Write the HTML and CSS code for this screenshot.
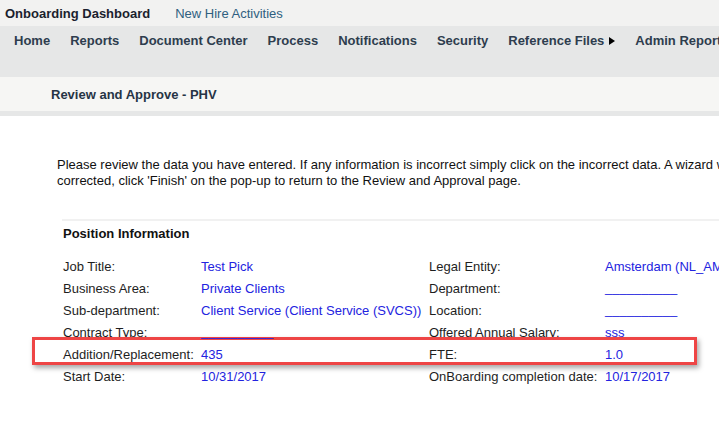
FILE: index.html
```html
<!DOCTYPE html>
<html>
<head>
<meta charset="utf-8">
<link rel="stylesheet" href="styles.css">
</head>
<body>
<div class="topbar">
  <span class="brand">Onboarding Dashboard</span>
  <span class="toplink">New Hire Activities</span>
</div>
<nav class="nav">
  <span class="nav-item">Home</span>
  <span class="nav-item">Reports</span>
  <span class="nav-item">Document Center</span>
  <span class="nav-item">Process</span>
  <span class="nav-item">Notifications</span>
  <span class="nav-item">Security</span>
  <span class="nav-item">Reference Files<i class="arrow"></i></span>
  <span class="nav-item">Admin Reports</span>
</nav>
<div class="subheader">Review and Approve - PHV</div>
<div class="strip"></div>
<main class="content">
  <p class="intro">Please review the data you have entered. If any information is incorrect simply click on the incorrect data. A wizard will open to guide you through the correction process. Once the data has been<br>corrected, click 'Finish' on the pop-up to return to the Review and Approval page.</p>
  <section class="section">
    <h2 class="section-title">Position Information</h2>
    <div class="rows">
      <div class="row">
        <span class="label">Job Title:</span><span class="value">Test Pick</span>
        <span class="label">Legal Entity:</span><span class="value">Amsterdam (NL_AMS)</span>
      </div>
      <div class="row">
        <span class="label">Business Area:</span><span class="value">Private Clients</span>
        <span class="label">Department:</span><span class="value blank">__________</span>
      </div>
      <div class="row">
        <span class="label">Sub-department:</span><span class="value">Client Service (Client Service (SVCS))</span>
        <span class="label">Location:</span><span class="value blank">__________</span>
      </div>
      <div class="row">
        <span class="label">Contract Type:</span><span class="value blank">__________</span>
        <span class="label">Offered Annual Salary:</span><span class="value">sss</span>
      </div>
      <div class="row row-highlight">
        <span class="label">Addition/Replacement:</span><span class="value">435</span>
        <span class="label">FTE:</span><span class="value">1.0</span>
      </div>
      <div class="row">
        <span class="label">Start Date:</span><span class="value">10/31/2017</span>
        <span class="label">OnBoarding completion date:</span><span class="value">10/17/2017</span>
      </div>
    </div>
  </section>
</main>
</body>
</html>
```

FILE: styles.css
```css
html {
  overflow: hidden;
}
body {
  margin: 0;
  font-family: "Liberation Sans", Arial, sans-serif;
  font-size: 13px;
  color: #1a1a1a;
  background: #ffffff;
  white-space: nowrap;
}
.topbar {
  height: 26px;
  background: #f2f2f1;
  display: flex;
  align-items: center;
  padding-left: 5px;
}
.brand {
  font-weight: bold;
  color: #1b1f2e;
}
.toplink {
  margin-left: 25px;
  color: #2f5f80;
}
.nav {
  height: 51px;
  box-sizing: border-box;
  background: #e6e7e7;
  padding: 7px 0 0 4px;
  display: flex;
  align-items: flex-start;
}
.nav-item {
  padding: 0 10px;
  line-height: 16px;
  font-weight: bold;
  color: #2e3d4e;
  display: flex;
  align-items: center;
}
.arrow {
  display: inline-block;
  width: 0;
  height: 0;
  margin-left: 5px;
  border-top: 4.5px solid transparent;
  border-bottom: 4.5px solid transparent;
  border-left: 6px solid #000;
}
.subheader {
  height: 34px;
  background: #f6f6f4;
  display: flex;
  align-items: center;
  padding-left: 51px;
  font-weight: bold;
  color: #263445;
}
.strip {
  height: 5px;
  background: #e6e7e7;
}
.content {
  padding: 41px 0 0 57px;
}
.intro {
  margin: 0;
  line-height: 16px;
  color: #111;
}
.section {
  margin: 30px 0 0 5px;
  border-top: 2px solid #f1f1f1;
  padding: 5px 0 0 1px;
}
.section-title {
  margin: 0;
  font-size: 13px;
  line-height: 16px;
  font-weight: bold;
  color: #111;
}
.rows {
  margin-top: 13px;
  width: 640px;
}
.row {
  display: grid;
  grid-template-columns: 138px 228px 176px 98px;
  height: 22px;
  align-items: center;
}
.label {
  color: #1e1e1e;
}
.value {
  color: #2323e0;
}
.blank {
  position: relative;
  top: -1px;
  z-index: 1;
}
.row-highlight {
  position: relative;
}
.row-highlight::after {
  content: "";
  position: absolute;
  top: -6px;
  bottom: 0;
  left: -31px;
  right: 6px;
  border: 3px solid #ee4545;
  box-shadow: 2px 3px 5px rgba(0, 0, 0, 0.35);
  pointer-events: none;
}
```
